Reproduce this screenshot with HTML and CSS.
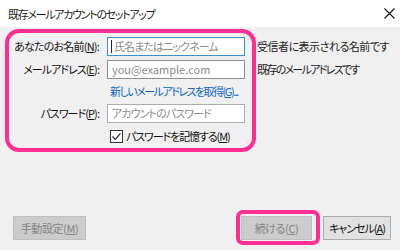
FILE: index.html
```html
<!DOCTYPE html>
<html lang="ja">
<head>
<meta charset="utf-8">
<link rel="stylesheet" href="styles.css">
</head>
<body>
<div class="window">
  <header class="titlebar">
    <span class="title">既存メールアカウントのセットアップ</span>
    <svg class="close" width="11" height="11" viewBox="0 0 11 11"><path d="M0.5 0.5L10.5 10.5M10.5 0.5L0.5 10.5" stroke="#111" stroke-width="1.1" fill="none"/></svg>
  </header>
  <main class="content">
    <div class="panel">
      <label class="label">あなたのお名前(<u>N</u>):</label>
      <div class="input focus"><span class="caret"></span><span class="ph">氏名またはニックネーム</span></div>
      <label class="label kana">メールアドレス(<u>E</u>):</label>
      <div class="input dark"><span class="ph latin">you@example.com</span></div>
      <span></span>
      <a class="link">新しいメールアドレスを取得(<u>G</u>)...</a>
      <label class="label kana">パスワード(<u>P</u>):</label>
      <div class="input light"><span class="ph">アカウントのパスワード</span></div>
      <span></span>
      <div class="check">
        <svg class="box" width="13" height="13" viewBox="0 0 13 13"><rect x="0.5" y="0.5" width="12" height="12" fill="#fff" stroke="#333"/><path d="M2.5 6.5L5.2 9.3L10.5 3.4" stroke="#222" stroke-width="1.2" fill="none"/></svg>
        <span class="check-text">パスワードを記憶する(<u>M</u>)</span>
      </div>
    </div>
    <div class="hints">
      <span class="hint">受信者に表示される名前です</span>
      <span class="hint kana-hint">既存のメールアドレスです</span>
    </div>
  </main>
  <footer class="footer">
    <button class="btn disabled">手動設定(<u>M</u>)</button>
    <div class="right">
      <button class="btn disabled wide marked">続ける(<u>C</u>)</button>
      <button class="btn normal">キャンセル(<u>A</u>)</button>
    </div>
  </footer>
</div>
</body>
</html>
```
FILE: styles.css
```css
* { box-sizing: border-box; }
html, body { margin: 0; padding: 0; }
body {
  width: 400px;
  height: 250px;
  overflow: hidden;
  background: #f0f0f0;
  font-family: "Noto Sans CJK JP", "Noto Sans", sans-serif;
  font-feature-settings: "palt";
  font-size: 11px;
  color: #111;
}
.window {
  height: 250px;
  display: flex;
  flex-direction: column;
}
.titlebar {
  height: 27px;
  background: #fff;
  display: flex;
  align-items: center;
  justify-content: space-between;
  padding: 0 5px 0 8px;
}
.title { font-size: 11px; color: #1a1a1a; letter-spacing: -1.3px; }
.content {
  display: flex;
  align-items: flex-start;
  padding: 2px 0 0 5px;
}
.panel {
  width: 251px;
  height: 123px;
  border: 4px solid #ff2f92;
  border-radius: 14px;
  display: grid;
  grid-template-columns: 91px 138px;
  grid-template-rows: 19px 19px 17px 19px 18px;
  column-gap: 7px;
  row-gap: 4px;
  padding: 4px 0 0 0;
}
.label {
  text-align: right;
  line-height: 19px;
  white-space: nowrap;
  letter-spacing: -0.8px;
  padding-right: 1px;
}
.label.kana { letter-spacing: -0.95px; }
.input {
  background: #fff;
  border: 1px solid #8f8f8f;
  display: flex;
  align-items: center;
  padding-left: 4px;
  line-height: 17px;
  overflow: hidden;
}
.input.focus { border-color: #3b8ed5; }
.input.light { border-color: #adadad; }
.ph { color: #8c8c8c; white-space: nowrap; overflow: hidden; letter-spacing: -0.9px; }
.ph.latin { letter-spacing: 0; }
.caret {
  flex: none;
  width: 1px;
  height: 13px;
  background: #222;
  margin-right: 2px;
  margin-left: -1px;
}
.link {
  color: #0a66c8;
  line-height: 17px;
  white-space: nowrap;
  padding-left: 3px;
  letter-spacing: -1.5px;
}
.check {
  display: flex;
  align-items: center;
  gap: 3px;
  padding-left: 3px;
  white-space: nowrap;
}
.check-text { letter-spacing: -1.1px; }
.box { flex: none; }
.hints {
  display: flex;
  flex-direction: column;
  gap: 4px;
  padding-top: 8px;
  padding-left: 1px;
}
.hint { line-height: 19px; color: #222; white-space: nowrap; letter-spacing: -0.5px; }
.hint.kana-hint { letter-spacing: -1.7px; }
.footer {
  margin-top: auto;
  display: flex;
  justify-content: space-between;
  align-items: center;
  padding: 0 9px 10px 13px;
}
.right { display: flex; gap: 11px; }
.btn {
  font-family: inherit;
  font-feature-settings: "palt";
  font-size: 11px;
  height: 24px;
  padding: 0;
  width: 73px;
  border: 1px solid #adadad;
  background: #e1e1e1;
  color: #111;
  line-height: 22px;
  white-space: nowrap;
  letter-spacing: -0.4px;
}
.btn.wide { width: 71px; }
.btn.normal { width: 68px; letter-spacing: -1px; }
.btn.disabled {
  background: #cccccc;
  border-color: #bfbfbf;
  color: #838383;
}
.marked { position: relative; }
.marked::after {
  content: "";
  position: absolute;
  top: -7px;
  bottom: -6px;
  left: -6px;
  right: -9px;
  border: 4px solid #ff2f92;
  border-radius: 7px;
}
u { text-underline-offset: 1px; }
```
